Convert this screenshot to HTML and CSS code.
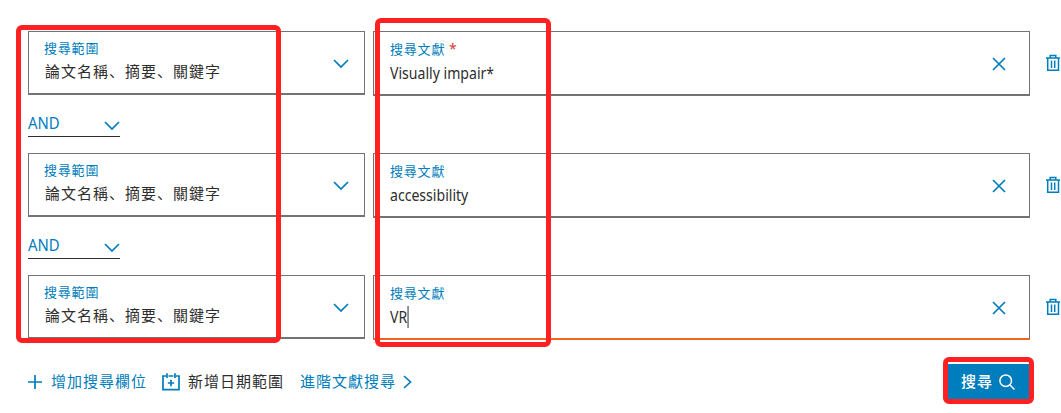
FILE: index.html
```
<!DOCTYPE html>
<html lang="zh">
<head>
<meta charset="utf-8">
<title>搜尋文獻</title>
<link rel="stylesheet" href="styles.css">
</head>
<body>
<svg class="defs" width="0" height="0" aria-hidden="true">
  <symbol id="chevron" viewBox="0 0 16 10"><path d="M1 1l7 7 7-7"/></symbol>
  <symbol id="cross" viewBox="0 0 14 14"><path d="M1 1l12 12M13 1L1 13"/></symbol>
  <symbol id="trash" viewBox="0 0 16 18"><path d="M1 4h14M5.200 4V1.500h5.600V4M2.700 4v12.300h10.800V4M6.500 6.500v7.500M9.700 6.500v7.500"/></symbol>
</svg>
<main class="search">
  <div class="row">
    <div class="field scope"><div class="text"><span class="label">搜尋範圍</span><span class="value">論文名稱、摘要、關鍵字</span></div><svg class="icon chevron"><use href="#chevron"/></svg></div>
    <div class="field query"><div class="text"><span class="label">搜尋文獻 <b class="required">*</b></span><span class="value latin">Visually impair*</span></div><svg class="icon cross" viewBox="0 0 14 14"><use href="#cross"/></svg></div>
    <svg class="icon trash"><use href="#trash"/></svg>
  </div>
  <div class="operator"><span>AND</span><svg class="icon chevron"><use href="#chevron"/></svg></div>
  <div class="row">
    <div class="field scope"><div class="text"><span class="label">搜尋範圍</span><span class="value">論文名稱、摘要、關鍵字</span></div><svg class="icon chevron"><use href="#chevron"/></svg></div>
    <div class="field query"><div class="text"><span class="label">搜尋文獻</span><span class="value latin">accessibility</span></div><svg class="icon cross" viewBox="0 0 14 14"><use href="#cross"/></svg></div>
    <svg class="icon trash"><use href="#trash"/></svg>
  </div>
  <div class="operator"><span>AND</span><svg class="icon chevron"><use href="#chevron"/></svg></div>
  <div class="row">
    <div class="field scope"><div class="text"><span class="label">搜尋範圍</span><span class="value">論文名稱、摘要、關鍵字</span></div><svg class="icon chevron"><use href="#chevron"/></svg></div>
    <div class="field query active"><div class="text"><span class="label">搜尋文獻</span><span class="value latin">VR<i class="caret"></i></span></div><svg class="icon cross" viewBox="0 0 14 14"><use href="#cross"/></svg></div>
    <svg class="icon trash"><use href="#trash"/></svg>
  </div>
  <div class="actions">
    <a class="action add"><svg class="icon plus" viewBox="0 0 14 14"><path d="M7 0v14M0 7h14"/></svg>增加搜尋欄位</a>
    <a class="action date"><svg class="icon calendar" viewBox="0 0 18 18"><path d="M4 3H1v13.700h16V3h-3M6.500 3h5M5 .3v4.700M13 .3v4.700M9 6.800v6.400M5.800 10h6.400"/></svg>新增日期範圍</a>
    <a class="action advanced">進階文獻搜尋<svg class="icon next" viewBox="0 0 9 14"><path d="M1 1l6.500 6L1 13"/></svg></a>
    <button class="submit">搜尋<svg class="icon lens" viewBox="0 0 16 16"><circle cx="6.700" cy="6.700" r="5.800"/><path d="M11 11l4.500 4.500"/></svg></button>
  </div>
</main>
<div class="mark mark-scope"></div>
<div class="mark mark-query"></div>
<div class="mark mark-submit"></div>
</body>
</html>
```
FILE: styles.css
```
* { box-sizing: border-box; }
body {
  margin: 0;
  width: 1061px;
  height: 413px;
  overflow: hidden;
  position: relative;
  background: #fff;
  color: #2e2e2e;
  font-family: "Noto Sans CJK SC", sans-serif;
}
.defs { position: absolute; }
.search { padding: 31px 0 0 28px; width: 1061px; }
.icon { display: block; flex: none; fill: none; stroke: #007dbc; stroke-width: 1.7; }
.row { display: flex; height: 65px; }
.field { display: flex; justify-content: space-between; border: 1px solid #737373; border-bottom-width: 2px; }
.scope { width: 337px; height: 64px; padding: 0 15px; }
.query { width: 657px; height: 65px; margin-left: 8px; padding: 0 23px 0 16px; }
.query.active { border-bottom-color: #f36421; }
.text { display: flex; flex-direction: column; padding-top: 6px; }
.label { height: 20px; line-height: 20px; font-size: 13px; letter-spacing: .8px; color: #007dbc; white-space: pre; }
.query .text { padding-top: 7px; }
.required { color: #d83933; font: 14px/16px "Noto Sans", sans-serif; }
.value { height: 27px; line-height: 26px; font-size: 15px; letter-spacing: 1px; padding-left: 1px; white-space: nowrap; }
.value.latin {
  display: flex;
  align-items: center;
  align-self: flex-start;
  padding-left: 0;
  font-family: "Noto Sans", sans-serif;
  font-size: 16px;
  letter-spacing: 0;
  transform: scaleX(.88);
  transform-origin: left;
}
.caret { width: 1.2px; height: 22px; background: #111; }
.field .chevron { width: 16px; height: 10px; margin-top: 27px; }
.cross { width: 14px; height: 14px; margin: 25px 0 0; }
.trash { width: 16px; height: 18px; margin: 23px 0 0 15px; stroke-width: 1.5; }
.operator {
  display: flex;
  justify-content: space-between;
  width: 92px;
  height: 25px;
  margin: 16px 0;
  border-bottom: 1px solid #2e2e2e;
  color: #007dbc;
  font: 15.5px/23px "Noto Sans", sans-serif;
}
.operator span { transform: scaleX(.96); transform-origin: left; }
.operator .chevron { width: 16px; height: 10px; margin-top: 9px; }
.actions { display: flex; align-items: center; height: 35px; margin-top: 24px; font-size: 15px; line-height: 22px; letter-spacing: 1px; }
.action { display: flex; align-items: center; height: 24px; padding-bottom: 2px; white-space: nowrap; color: #007dbc; }
.action .icon { position: relative; top: 1px; }
.plus { width: 14px; height: 14px; margin-right: 9px; }
.calendar { width: 18px; height: 18px; margin-right: 8px; }
.action.date { color: #2e2e2e; margin-left: 15px; }
.action.advanced { margin-left: 16px; }
.next { width: 9px; height: 14px; margin-left: 7px; }
.submit {
  display: flex;
  align-items: center;
  justify-content: center;
  gap: 6px;
  width: 82px;
  height: 35px;
  margin: 0 32px 0 auto;
  padding: 0 0 2px;
  border: 0;
  background: #007dbc;
  color: #fff;
  font: 500 15px/22px "Noto Sans CJK SC", sans-serif;
  letter-spacing: 1px;
}
.lens { width: 16px; height: 16px; margin-top: 2px; stroke: #fff; stroke-width: 1.5; }
.mark { position: absolute; border: 5px solid #ff2022; border-radius: 6px; }
.mark-scope { left: 16px; top: 25px; width: 265px; height: 318px; }
.mark-query { left: 375px; top: 18px; width: 176px; height: 329px; }
.mark-submit { left: 943px; top: 357px; width: 91px; height: 47px; }
```
